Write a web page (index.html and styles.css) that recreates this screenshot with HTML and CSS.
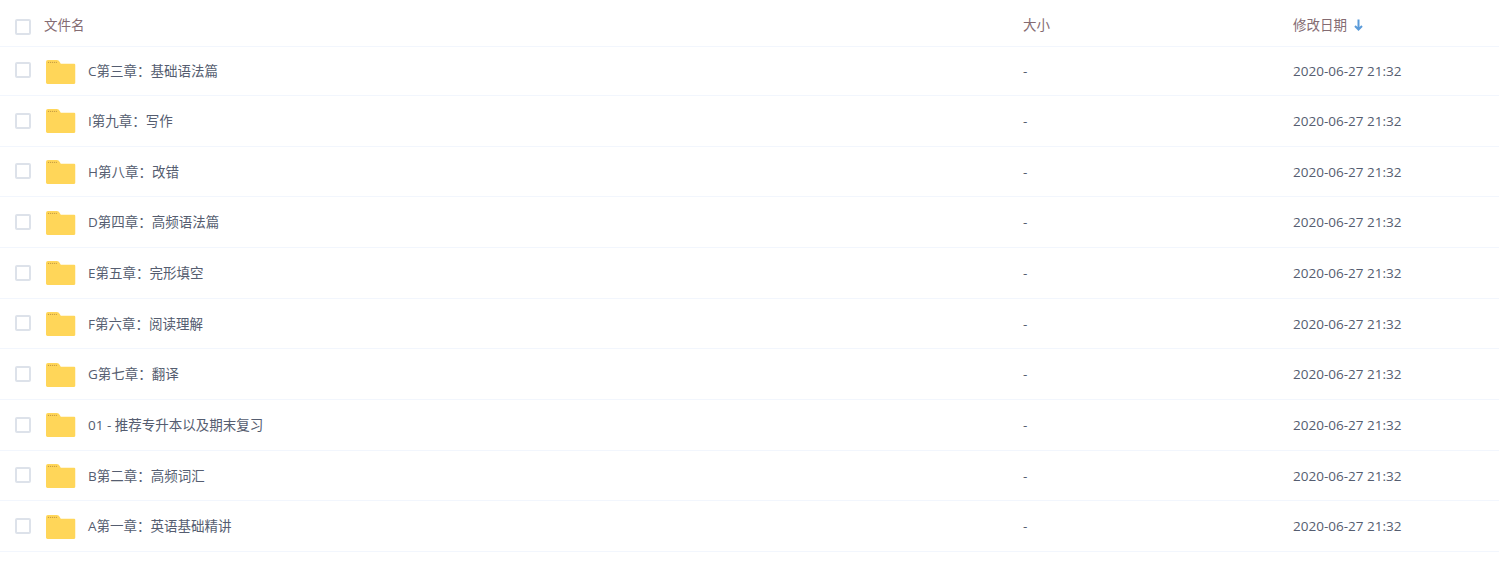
FILE: index.html
```html
<!DOCTYPE html>
<html>
<head>
  <title>文件列表</title>
  <link rel="stylesheet" href="styles.css">
</head>
<body>
  <svg class="defs" width="0" height="0">
    <symbol id="folder" viewBox="0 0 30 25" preserveAspectRatio="none">
      <path d="M0 2 Q0 0 2 0 H11 Q13 0 14 2 L15 4 H28.5 Q30 4 30 5.5 V23.5 Q30 25 28.5 25 H1.5 Q0 25 0 23.5 Z" fill="#ffd659"/>
      <path d="M2 2.5 H12" stroke="#b98f3e" stroke-width="1" stroke-dasharray="1 1" fill="none"/>
    </symbol>
  </svg>
  <div class="file-list">
    <div class="head">
      <span class="check"></span>
      <span class="col-name">文件名</span>
      <span class="col-size">大小</span>
      <span class="col-date">修改日期
        <svg class="sort" width="9" height="12" viewBox="0 0 9 12"><path d="M4.5 0.5 V10.5 M1 7 L4.5 10.5 L8 7" fill="none" stroke="#5b9bd9" stroke-width="2"/></svg>
      </span>
    </div>
    <div class="row">
      <span class="check"></span>
      <svg class="icon"><use href="#folder"/></svg>
      <span class="col-name">C第三章：基础语法篇</span>
      <span class="col-size">-</span>
      <span class="col-date">2020-06-27 21:32</span>
    </div>
    <div class="row">
      <span class="check"></span>
      <svg class="icon"><use href="#folder"/></svg>
      <span class="col-name">I第九章：写作</span>
      <span class="col-size">-</span>
      <span class="col-date">2020-06-27 21:32</span>
    </div>
    <div class="row">
      <span class="check"></span>
      <svg class="icon"><use href="#folder"/></svg>
      <span class="col-name">H第八章：改错</span>
      <span class="col-size">-</span>
      <span class="col-date">2020-06-27 21:32</span>
    </div>
    <div class="row">
      <span class="check"></span>
      <svg class="icon"><use href="#folder"/></svg>
      <span class="col-name">D第四章：高频语法篇</span>
      <span class="col-size">-</span>
      <span class="col-date">2020-06-27 21:32</span>
    </div>
    <div class="row">
      <span class="check"></span>
      <svg class="icon"><use href="#folder"/></svg>
      <span class="col-name">E第五章：完形填空</span>
      <span class="col-size">-</span>
      <span class="col-date">2020-06-27 21:32</span>
    </div>
    <div class="row">
      <span class="check"></span>
      <svg class="icon"><use href="#folder"/></svg>
      <span class="col-name">F第六章：阅读理解</span>
      <span class="col-size">-</span>
      <span class="col-date">2020-06-27 21:32</span>
    </div>
    <div class="row">
      <span class="check"></span>
      <svg class="icon"><use href="#folder"/></svg>
      <span class="col-name">G第七章：翻译</span>
      <span class="col-size">-</span>
      <span class="col-date">2020-06-27 21:32</span>
    </div>
    <div class="row">
      <span class="check"></span>
      <svg class="icon"><use href="#folder"/></svg>
      <span class="col-name">01 - 推荐专升本以及期末复习</span>
      <span class="col-size">-</span>
      <span class="col-date">2020-06-27 21:32</span>
    </div>
    <div class="row">
      <span class="check"></span>
      <svg class="icon"><use href="#folder"/></svg>
      <span class="col-name">B第二章：高频词汇</span>
      <span class="col-size">-</span>
      <span class="col-date">2020-06-27 21:32</span>
    </div>
    <div class="row">
      <span class="check"></span>
      <svg class="icon"><use href="#folder"/></svg>
      <span class="col-name">A第一章：英语基础精讲</span>
      <span class="col-size">-</span>
      <span class="col-date">2020-06-27 21:32</span>
    </div>
  </div>
</body>
</html>
```

FILE: styles.css
```css
html, body {
  margin: 0;
  background: #fff;
}
body {
  font-family: "Open Sans", "Noto Sans CJK SC", sans-serif;
  font-size: 13.5px;
  line-height: 20px;
  color: #555d70;
}
.defs {
  display: block;
  height: 0;
}
.head, .row {
  display: flex;
  align-items: center;
  box-sizing: border-box;
  padding-left: 15px;
  border-bottom: 1px solid #f2f6fd;
}
.head {
  height: 47px;
  color: #846b72;
  padding-top: 4px;
}
.row {
  height: 50.667px;
}
.head + .row {
  height: 49px;
}
.head + .row .check {
  margin-bottom: 2px;
}
.check {
  box-sizing: border-box;
  flex: none;
  width: 16px;
  height: 16px;
  border: 2px solid #dde2ea;
  border-radius: 2px;
  background: #fff;
}
.head .check {
  margin-top: 3px;
}
.head .col-name {
  margin-left: 13px;
  width: 979px;
}
.icon {
  flex: none;
  width: 29.5px;
  height: 24px;
  margin: 1px 0 0 15px;
}
.row .col-name {
  margin-left: 12.5px;
  width: 935px;
}
.col-size {
  flex: none;
  width: 270px;
}
.col-date {
  flex: none;
}
.row .col-name, .row .col-size, .row .col-date {
  padding-top: 0.6px;
}
.sort {
  margin-left: 3px;
  vertical-align: -1px;
}
```
